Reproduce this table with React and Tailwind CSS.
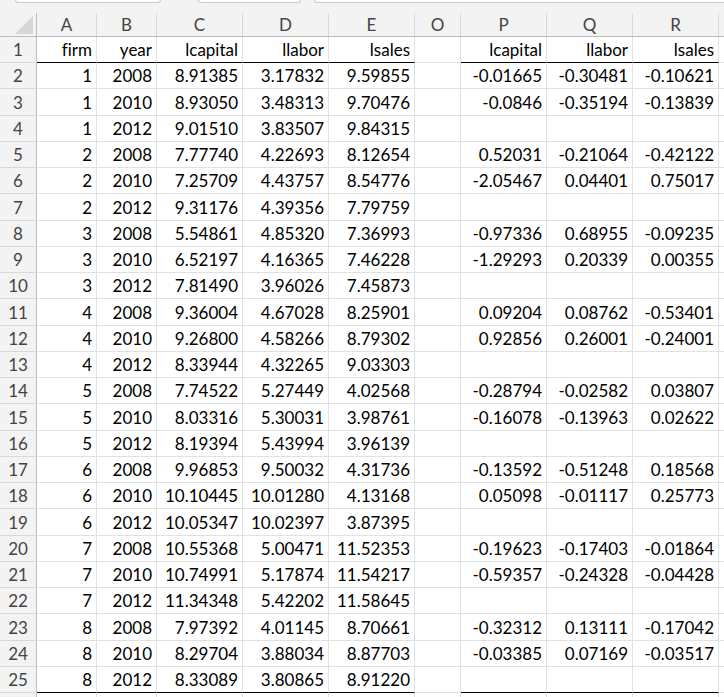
import React from "react";

const COLS = [
  { key: "A", w: "w-[60px]" },
  { key: "B", w: "w-[60px]" },
  { key: "C", w: "w-[86px]" },
  { key: "D", w: "w-[86px]" },
  { key: "E", w: "w-[86px]" },
  { key: "O", w: "w-[46px]" },
  { key: "P", w: "w-[86px]" },
  { key: "Q", w: "w-[86px]" },
  { key: "R", w: "w-[86px]" },
];

const ROWS = [
  ["firm", "year", "lcapital", "llabor", "lsales", "", "lcapital", "llabor", "lsales"],
  ["1", "2008", "8.91385", "3.17832", "9.59855", "", "-0.01665", "-0.30481", "-0.10621"],
  ["1", "2010", "8.93050", "3.48313", "9.70476", "", "-0.0846", "-0.35194", "-0.13839"],
  ["1", "2012", "9.01510", "3.83507", "9.84315", "", "", "", ""],
  ["2", "2008", "7.77740", "4.22693", "8.12654", "", "0.52031", "-0.21064", "-0.42122"],
  ["2", "2010", "7.25709", "4.43757", "8.54776", "", "-2.05467", "0.04401", "0.75017"],
  ["2", "2012", "9.31176", "4.39356", "7.79759", "", "", "", ""],
  ["3", "2008", "5.54861", "4.85320", "7.36993", "", "-0.97336", "0.68955", "-0.09235"],
  ["3", "2010", "6.52197", "4.16365", "7.46228", "", "-1.29293", "0.20339", "0.00355"],
  ["3", "2012", "7.81490", "3.96026", "7.45873", "", "", "", ""],
  ["4", "2008", "9.36004", "4.67028", "8.25901", "", "0.09204", "0.08762", "-0.53401"],
  ["4", "2010", "9.26800", "4.58266", "8.79302", "", "0.92856", "0.26001", "-0.24001"],
  ["4", "2012", "8.33944", "4.32265", "9.03303", "", "", "", ""],
  ["5", "2008", "7.74522", "5.27449", "4.02568", "", "-0.28794", "-0.02582", "0.03807"],
  ["5", "2010", "8.03316", "5.30031", "3.98761", "", "-0.16078", "-0.13963", "0.02622"],
  ["5", "2012", "8.19394", "5.43994", "3.96139", "", "", "", ""],
  ["6", "2008", "9.96853", "9.50032", "4.31736", "", "-0.13592", "-0.51248", "0.18568"],
  ["6", "2010", "10.10445", "10.01280", "4.13168", "", "0.05098", "-0.01117", "0.25773"],
  ["6", "2012", "10.05347", "10.02397", "3.87395", "", "", "", ""],
  ["7", "2008", "10.55368", "5.00471", "11.52353", "", "-0.19623", "-0.17403", "-0.01864"],
  ["7", "2010", "10.74991", "5.17874", "11.54217", "", "-0.59357", "-0.24328", "-0.04428"],
  ["7", "2012", "11.34348", "5.42202", "11.58645", "", "", "", ""],
  ["8", "2008", "7.97392", "4.01145", "8.70661", "", "-0.32312", "0.13111", "-0.17042"],
  ["8", "2010", "8.29704", "3.88034", "8.87703", "", "-0.03385", "0.07169", "-0.03517"],
  ["8", "2012", "8.33089", "3.80865", "8.91220", "", "", "", ""],
];

function Cell({ col, value, thick }) {
  const border = thick && col.key !== "O" ? "border-b-black" : "border-b-[#e1e1e1]";
  return (
    <div
      className={`${col.w} shrink-0 h-full flex items-center justify-end pr-[4px] border-r border-b border-r-[#e1e1e1] ${border} whitespace-nowrap text-[#000000]`}
    >
      {value}
    </div>
  );
}

export default function App() {
  return (
    <div
      className="w-[724px] h-[697px] overflow-hidden bg-white text-[17px] leading-none [font-variant-ligatures:none]"
      style={{ fontFamily: "Lato, 'Open Sans', sans-serif" }}
    >
      {/* top strip with formula-bar remnants */}
      <div className="h-[13px] bg-[#f3f3f3] flex items-start">
        <div className="ml-[15px] w-[146px] h-[3px] bg-white border-b border-x border-[#c8c8c8] rounded-b-[3px]" />
        <div className="ml-[37px] w-[103px] h-[3px] bg-white border-b border-x border-[#c8c8c8] rounded-b-[3px]" />
        <div className="ml-[13px] flex-1 h-[3px] bg-white border-b border-l border-[#c8c8c8] rounded-bl-[3px]" />
      </div>

      {/* column header row */}
      <div className="h-[24px] flex bg-[#f3f3f3] border-b border-[#bcbcbc] text-[#444444]">
        <div className="w-[37px] shrink-0 h-full border-r border-[#bcbcbc] flex items-end justify-end pr-[3px] pb-[2px]">
          <svg width="18" height="18" viewBox="0 0 18 18">
            <polygon points="18,0 18,18 0,18" fill="#d6d6d6" />
          </svg>
        </div>
        {COLS.map((c) => (
          <div
            key={c.key}
            className={`${c.w} shrink-0 h-full flex items-center justify-center border-r border-[#d8d8d8]`}
          >
            {c.key}
          </div>
        ))}
        <div className="flex-1 h-full" />
      </div>

      {/* data rows */}
      {ROWS.map((row, i) => {
        const h = i % 4 === 2 ? "h-[27px]" : "h-[26px]";
        const thick = i === 0 || i === 24;
        return (
          <div key={i} className={`${h} flex`}>
            <div className="w-[37px] shrink-0 h-full bg-[#f3f3f3] border-r border-r-[#bcbcbc] border-b border-b-[#d8d8d8] flex items-center justify-center text-[#444444]">
              {i + 1}
            </div>
            {COLS.map((c, j) => (
              <Cell key={c.key} col={c} value={row[j]} thick={thick} />
            ))}
            <div className="flex-1 h-full border-b border-[#e1e1e1]" />
          </div>
        );
      })}
      <div className="h-[26px] flex">
        <div className="w-[37px] shrink-0 h-full bg-[#f3f3f3] border-r border-r-[#bcbcbc]" />
        {COLS.map((c) => (
          <div key={c.key} className={`${c.w} shrink-0 h-full border-r border-[#e1e1e1]`} />
        ))}
      </div>
    </div>
  );
}
